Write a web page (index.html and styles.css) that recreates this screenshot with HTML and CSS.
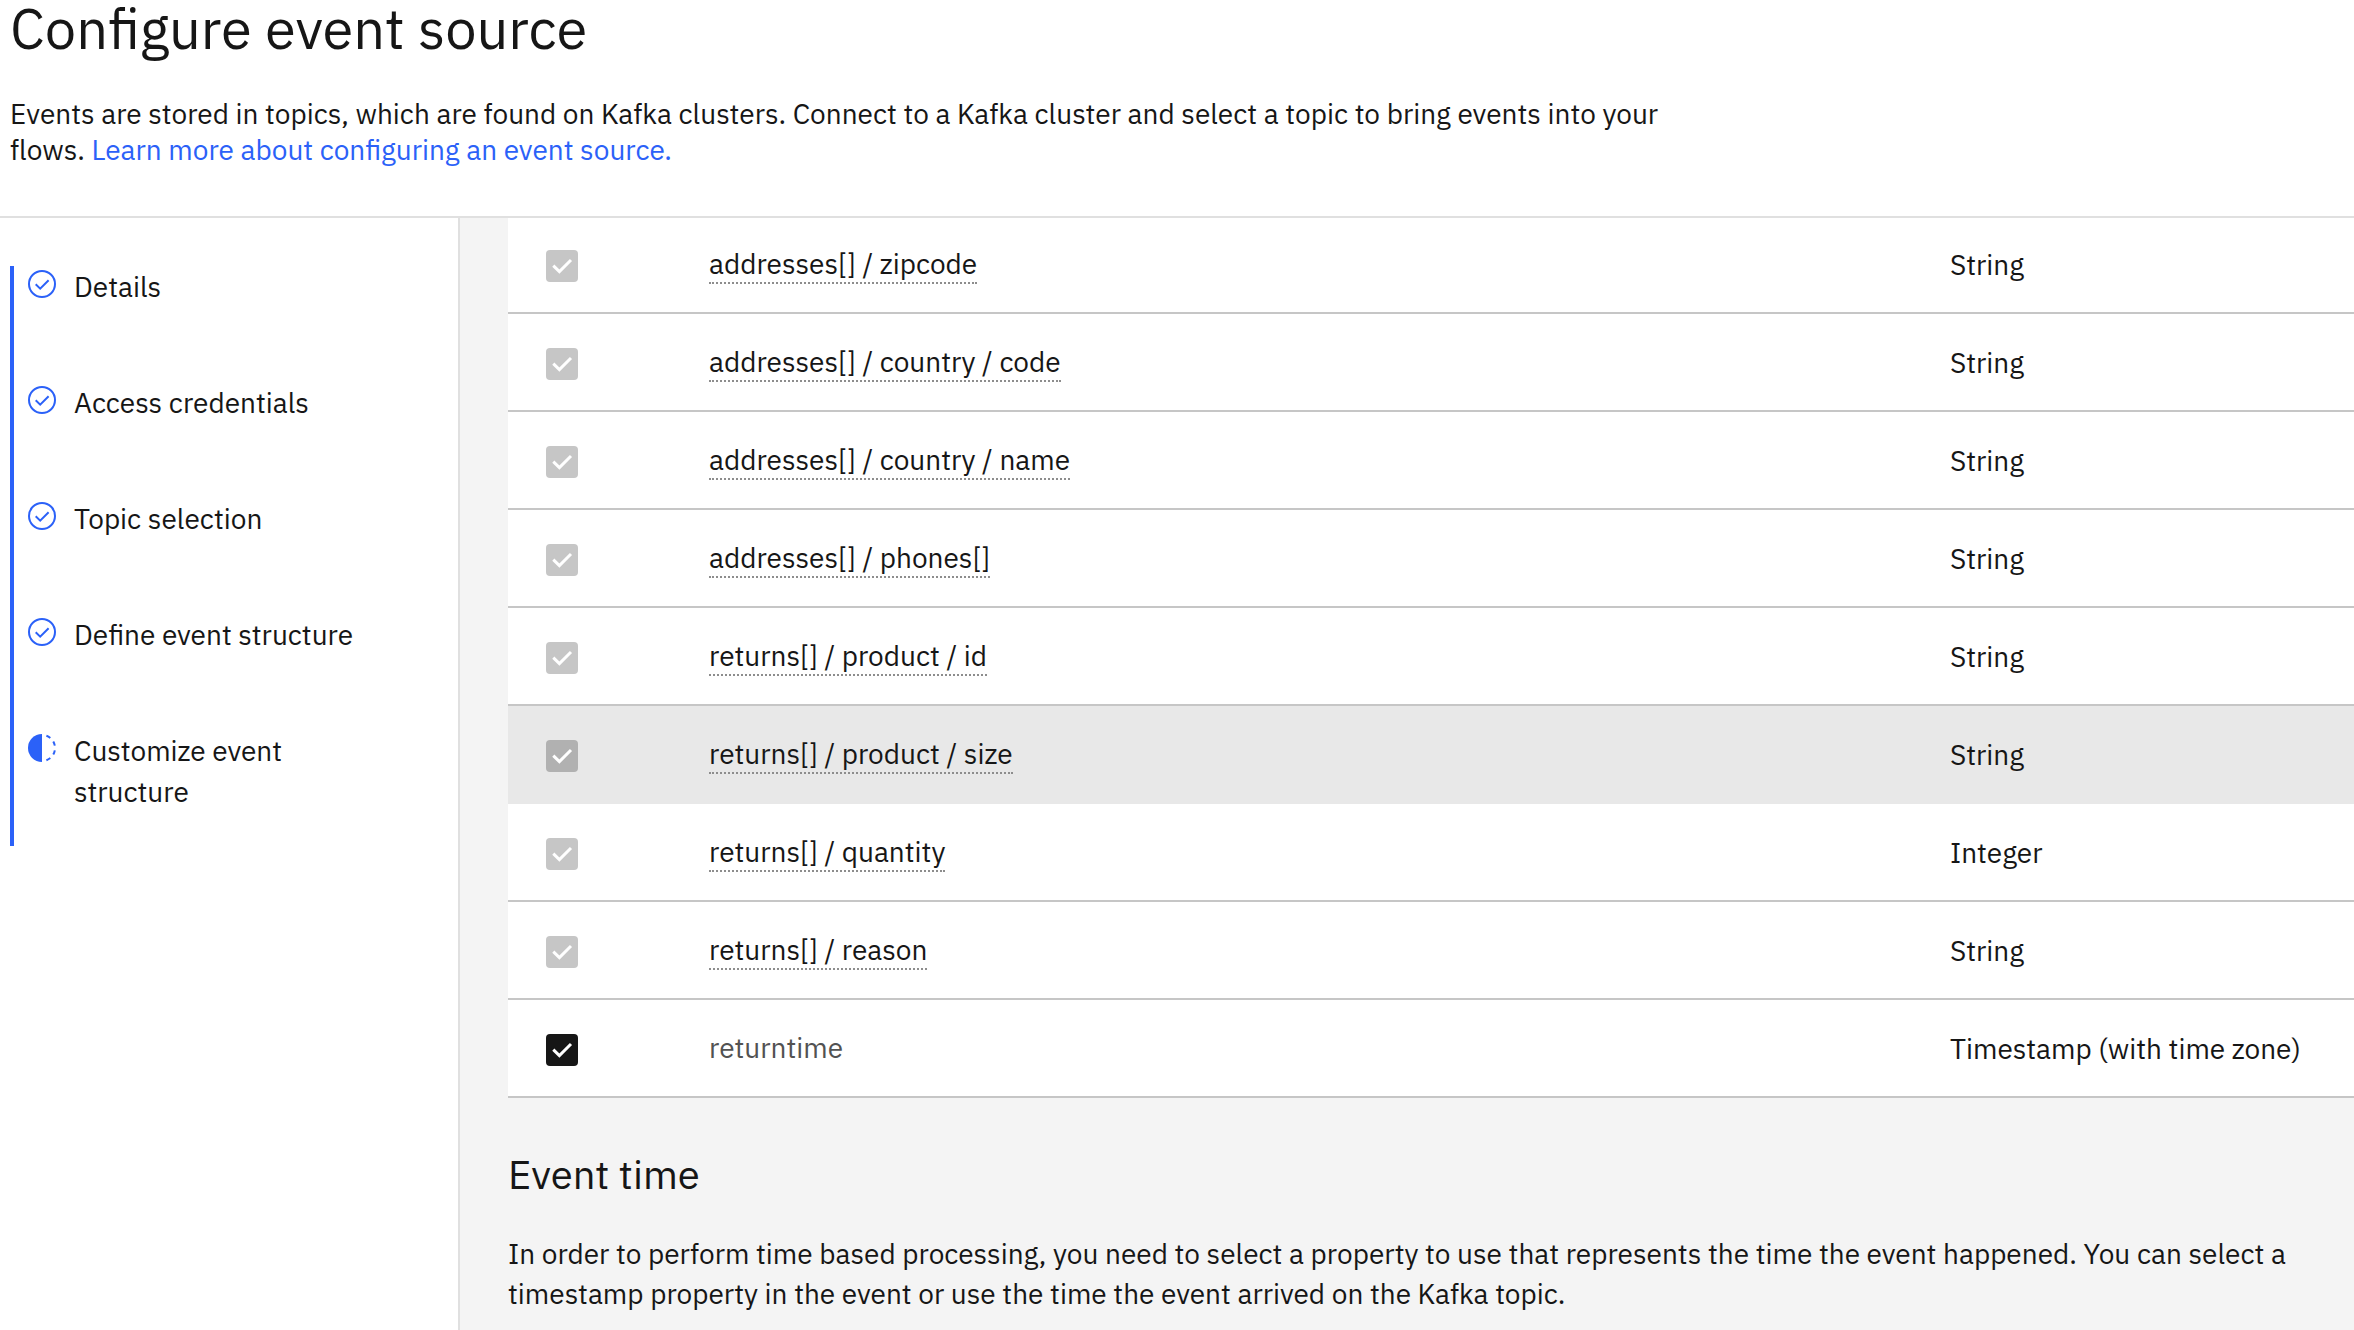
FILE: index.html
```html
<!DOCTYPE html>
<html lang="en">
<head>
<meta charset="utf-8">
<meta name="viewport" content="width=device-width, initial-scale=1">
<title>Configure event source</title>
<link rel="stylesheet" href="styles.css">
</head>
<body>
<svg class="sprite" aria-hidden="true">
  <symbol id="done" viewBox="0 0 28 28">
    <circle cx="14" cy="14" r="13" fill="none" stroke="currentColor" stroke-width="2"/>
    <path d="M7.7 14.2l4.5 4.4 8.4-8.4" fill="none" stroke="currentColor" stroke-width="2"/>
  </symbol>
  <symbol id="current" viewBox="0 0 28 28">
    <path d="M14 0a14 14 0 0 0 0 28z" fill="currentColor"/>
    <path d="M18.4 1.8a13 13 0 0 1 3.9 2.2M25.3 7.5a13 13 0 0 1 1.5 4.2M26.8 16.3a13 13 0 0 1-1.5 4.2M22.3 24a13 13 0 0 1-3.9 2.2" fill="none" stroke="currentColor" stroke-width="2"/>
  </symbol>
  <symbol id="tick" viewBox="0 0 32 32">
    <path d="M7.3 15.6l6.1 6 11.6-11.6" fill="none" stroke="#fff" stroke-width="3"/>
  </symbol>
</svg>

<header class="page-header">
  <h1 class="page-title">Configure event source</h1>
  <p class="page-intro">Events are stored in topics, which are found on Kafka clusters. Connect to a Kafka cluster and select a topic to bring events into your flows. <a class="link" href="#">Learn more about configuring an event source.</a></p>
</header>

<div class="layout">
  <nav class="sidebar" aria-label="Progress">
    <ol class="steps">
      <li class="step"><svg class="step-icon"><use href="#done"/></svg><span>Details</span></li>
      <li class="step"><svg class="step-icon"><use href="#done"/></svg><span>Access credentials</span></li>
      <li class="step"><svg class="step-icon"><use href="#done"/></svg><span>Topic selection</span></li>
      <li class="step"><svg class="step-icon"><use href="#done"/></svg><span>Define event structure</span></li>
      <li class="step" aria-current="step"><svg class="step-icon"><use href="#current"/></svg><span>Customize event structure</span></li>
    </ol>
  </nav>

  <main class="content">
    <table class="properties">
      <colgroup><col class="col-check"><col><col class="col-type"></colgroup>
      <tbody>
        <tr><td><label class="check"><input type="checkbox" checked disabled aria-label="addresses[] / zipcode"><svg><use href="#tick"/></svg></label></td><td><button type="button" class="term">addresses[] / zipcode</button></td><td>String</td></tr>
        <tr><td><label class="check"><input type="checkbox" checked disabled aria-label="addresses[] / country / code"><svg><use href="#tick"/></svg></label></td><td><button type="button" class="term">addresses[] / country / code</button></td><td>String</td></tr>
        <tr><td><label class="check"><input type="checkbox" checked disabled aria-label="addresses[] / country / name"><svg><use href="#tick"/></svg></label></td><td><button type="button" class="term">addresses[] / country / name</button></td><td>String</td></tr>
        <tr><td><label class="check"><input type="checkbox" checked disabled aria-label="addresses[] / phones[]"><svg><use href="#tick"/></svg></label></td><td><button type="button" class="term">addresses[] / phones[]</button></td><td>String</td></tr>
        <tr><td><label class="check"><input type="checkbox" checked disabled aria-label="returns[] / product / id"><svg><use href="#tick"/></svg></label></td><td><button type="button" class="term">returns[] / product / id</button></td><td>String</td></tr>
        <tr class="is-active"><td><label class="check"><input type="checkbox" checked disabled aria-label="returns[] / product / size"><svg><use href="#tick"/></svg></label></td><td><button type="button" class="term">returns[] / product / size</button></td><td>String</td></tr>
        <tr><td><label class="check"><input type="checkbox" checked disabled aria-label="returns[] / quantity"><svg><use href="#tick"/></svg></label></td><td><button type="button" class="term">returns[] / quantity</button></td><td>Integer</td></tr>
        <tr><td><label class="check"><input type="checkbox" checked disabled aria-label="returns[] / reason"><svg><use href="#tick"/></svg></label></td><td><button type="button" class="term">returns[] / reason</button></td><td>String</td></tr>
        <tr><td><label class="check"><input type="checkbox" checked aria-label="returntime"><svg><use href="#tick"/></svg></label></td><td class="muted">returntime</td><td>Timestamp (with time zone)</td></tr>
      </tbody>
    </table>

    <section class="event-time">
      <h2 class="section-title">Event time</h2>
      <p class="section-text">In order to perform time based processing, you need to select a property to use that represents the time the event happened. You can select a timestamp property in the event or use the time the event arrived on the Kafka topic.</p>
    </section>
  </main>
</div>
</body>
</html>
```
FILE: styles.css
```css
:root {
  --text: #161616;
  --text-muted: #525252;
  --blue: #2b61f8;
  --line: #e0e0e0;
  --row-line: #c6c6c6;
  --layer: #f4f4f4;
}

* { box-sizing: border-box; }

html, body { height: 100%; }

body {
  display: flex;
  flex-direction: column;
  margin: 0;
  overflow: hidden;
  background: #fff;
  color: var(--text);
  font-family: "IBM Plex Sans", Roboto, "Liberation Sans", sans-serif;
  font-size: 28px;
  line-height: 40px;
}

h1, h2, p, ol { margin: 0; padding: 0; font-weight: 400; }

.sprite { display: none; }

.page-header {
  position: relative;
  z-index: 1;
  flex: none;
  padding: 0 10px 48px;
  border-bottom: 2px solid var(--line);
  background: #fff;
}

.page-title {
  margin-bottom: 40px;
  font-size: 56px;
  line-height: 56px;
}

.page-intro {
  max-width: 1720px;
  line-height: 36px;
}

.link { color: var(--blue); text-decoration: none; }

.layout {
  display: flex;
  flex: 1;
  min-height: 0;
}

.sidebar {
  flex: none;
  width: 460px;
  padding: 48px 10px 0;
  border-right: 2px solid var(--line);
}

.steps { list-style: none; border-left: 4px solid var(--blue); }

.step {
  display: flex;
  gap: 18px;
  height: 116px;
  padding: 0 72px 0 14px;
  line-height: 41px;
}

.step-icon {
  flex: none;
  width: 28px;
  height: 28px;
  margin-top: 4px;
  color: var(--blue);
}

.content {
  flex: 1;
  min-width: 0;
  padding-left: 48px;
  overflow: hidden;
  background: var(--layer);
}

/* The list is scrolled, so its first row begins under the header's rule. */
.properties {
  width: 100%;
  margin-top: -2px;
  border-spacing: 0;
  table-layout: fixed;
  background: #fff;
}

.col-check { width: 201px; }
.col-type { width: 404px; }

.properties td {
  height: 98px;
  padding: 30px 0 0;
  border-bottom: 2px solid var(--row-line);
  line-height: 38px;
  vertical-align: top;
}

.properties td:first-child { padding: 34px 0 0 38px; }

.properties .is-active td { border-color: #e8e8e8; background: #e8e8e8; }

.properties .muted { color: var(--text-muted); line-height: 36px; }

.check { display: grid; width: 32px; height: 32px; }

.check input,
.check svg {
  grid-area: 1 / 1;
  width: 32px;
  height: 32px;
  margin: 0;
}

.check input {
  appearance: none;
  border-radius: 4px;
  background: var(--text);
}

.check input:disabled { background: #c6c6c6; }
.is-active .check input:disabled { background: #b1b1b1; }
.check svg { pointer-events: none; }

.term {
  display: block;
  padding: 0;
  border: 0;
  border-bottom: 2px dotted #8d8d8d;
  background: none;
  color: inherit;
  font: inherit;
  line-height: 36px;
}

.event-time { padding: 50px 16px 0 0; }

.section-title {
  margin-bottom: 34px;
  font-size: 40px;
  line-height: 52px;
}
```
